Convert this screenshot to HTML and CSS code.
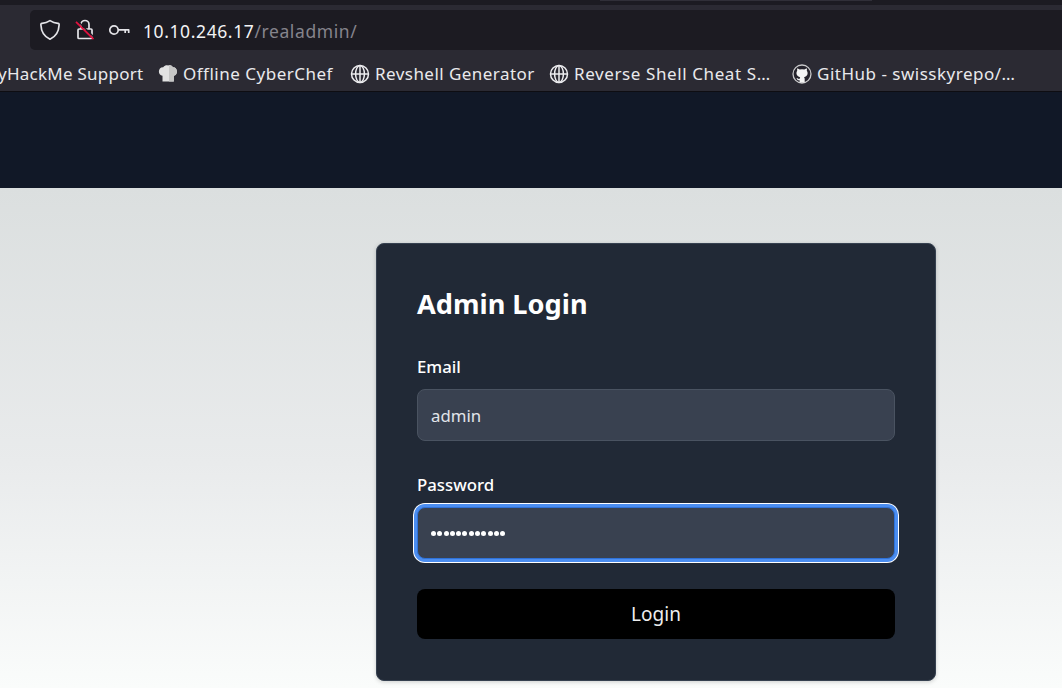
FILE: index.html
```html
<!DOCTYPE html>
<html lang="en">
<head>
<meta charset="utf-8">
<title>Admin Login</title>
<link rel="stylesheet" href="styles.css">
</head>
<body>
<div class="tabstrip"><span class="tab-edge"></span></div>
<div class="toolbar">
  <div class="urlbar">
    <svg class="ico" width="22" height="22" viewBox="0 0 22 22"><path d="M11 1.6C8.8 3 6 4 3 4.3C1.9 4.4 1.8 5 1.9 6C2.2 12.6 5.6 17.8 11 20.2C16.4 17.8 19.8 12.6 20.1 6C20.2 5 20.1 4.4 19 4.3C16 4 13.2 3 11 1.6Z"/></svg>
    <svg class="ico lock" width="22" height="22" viewBox="0 0 22 22"><path d="M7 10V5.5A4 4 0 0 1 15 5.5V10M5 10H17Q18 10 18 11V18.5Q18 19.5 17 19.5H5Q4 19.5 4 18.5V11Q4 10 5 10Z"/><path class="shade" d="M3.5 1.8L20.5 18.8"/><path class="slash" d="M2 2.8L19.5 20.2"/></svg>
    <svg class="ico key" width="22" height="22" viewBox="0 0 22 22"><circle cx="6" cy="11" r="4.2"/><path d="M10.2 10.8H20.7V14M17.2 10.8V14"/></svg>
    <span class="url"><b>10.10.246.17</b>/realadmin/</span>
  </div>
</div>
<nav class="bookmarks">
  <a class="bm first"><span>yHackMe Support</span></a>
  <a class="bm chef"><svg width="20" height="20" viewBox="0 0 20 20"><path fill="#e2e2e2" d="M4.5 11.7C-.8 10.8 0 3 5.2 3.2C7 .9 9 1 10 1.5C12 .7 14 1.5 15 3.2C20 3.2 20.2 10.7 15.8 11.7V17.5H4.5Z"/><path fill="#c6c6c6" d="M11 1.3C12.5 .9 14 1.5 15 3.2C20 3.2 20.2 10.7 15.8 11.7V17.5H11Z"/></svg><span>Offline CyberChef</span></a>
  <a class="bm rev"><svg class="globe" width="20" height="20" viewBox="0 0 20 20"><circle cx="10" cy="10" r="8.5"/><ellipse cx="10" cy="10" rx="4.4" ry="8.5"/><path d="M1.5 10H18.5M10 1.5V18.5"/></svg><span>Revshell Generator</span></a>
  <a class="bm cheat"><svg class="globe" width="20" height="20" viewBox="0 0 20 20"><circle cx="10" cy="10" r="8.5"/><ellipse cx="10" cy="10" rx="4.4" ry="8.5"/><path d="M1.5 10H18.5M10 1.5V18.5"/></svg><span>Reverse Shell Cheat S…</span></a>
  <a class="bm git"><svg width="20" height="20" viewBox="0 0 20 20"><circle cx="10" cy="10" r="9" fill="#25232c" stroke="#c9c9cb" stroke-width="1.3"/><path fill="#f4f4f4" d="M5.3 4.3L7.7 5.4Q10 4.9 12.3 5.4L14.7 4.3Q15.2 5.7 14.8 6.8C16.6 9.5 15.3 12.7 12 13.2Q12.7 14 12.7 15V18.5H7.6V16.3C5.5 16.7 5.3 15.2 4.4 14.4C6 14 6.3 15.4 7.6 15Q7.6 13.8 8.2 13.2C4.8 12.7 3.5 9.5 5.2 6.8Q4.9 5.5 5.3 4.3Z"/></svg><span>GitHub - swisskyrepo/…</span></a>
</nav>
<header class="site-header"></header>
<main class="page">
  <form class="card">
    <h1><span>Admin Login</span></h1>
    <label class="l-email"><span>Email</span></label>
    <div class="field"><span>admin</span></div>
    <label class="l-pass"><span>Password</span></label>
    <div class="field focused"><i></i><i></i><i></i><i></i><i></i><i></i><i></i><i></i><i></i><i></i><i></i><i></i></div>
    <button type="button"><span>Login</span></button>
  </form>
</main>
</body>
</html>
```
FILE: styles.css
```css
* { box-sizing: border-box; }
body { margin: 0; width: 1062px; height: 688px; overflow: hidden; display: flex; flex-direction: column; font-family: "Noto Sans", "Open Sans", sans-serif; background: #2b2a33; }
.tabstrip { height: 5px; flex: none; background: #1c1b22; }
.tab-edge { display: block; width: 272px; height: 1px; margin-left: 600px; background: #302f38; }
.toolbar { height: 53px; flex: none; padding: 5px 0 0 30px; }
.urlbar { height: 40px; border-radius: 5px 0 0 5px; background: #1c1b22; display: flex; align-items: center; padding-left: 9px; }
.ico { flex: none; fill: none; stroke: #e4e4e8; stroke-width: 1.7; stroke-linejoin: round; }
.lock { margin-left: 13px; }
.key { margin-left: 12px; }
.slash { stroke: #e2123f; stroke-width: 1.8; }
.shade { stroke: #1c1b22; stroke-width: 1.5; }
.url { margin: 2px 0 0 13px; font-size: 17.5px; letter-spacing: .6px; color: #85848c; white-space: nowrap; }
.url b { font-weight: 400; color: #f3f3f5; }
.bookmarks { height: 34px; flex: none; display: flex; align-items: center; padding-bottom: 2px; border-bottom: 1px solid #0e0d12; color: #e9e9ec; font-size: 17px; letter-spacing: .5px; white-space: nowrap; }
.bm { display: flex; align-items: center; gap: 5px; flex: none; }
.bm svg { flex: none; }
.first { width: 160px; margin-left: -2px; letter-spacing: .25px; }
.chef { width: 192px; }
.rev { width: 199px; letter-spacing: .45px; }
.cheat { width: 243px; letter-spacing: .6px; }
.globe { fill: none; stroke: #ededf0; stroke-width: 1.5; }
.site-header { height: 96px; flex: none; background: #111827; }
.page { flex: 1; padding: 55px 0 0 376px; background: linear-gradient(#dbdfdf, #e9ebec 55%, #fafcfb); }
.card { width: 560px; height: 438px; padding: 41px 40px 0; border: 1px solid #364150; border-radius: 8px; background: #212936; box-shadow: 0 1px 4px rgba(0,0,0,.18); display: flex; flex-direction: column; }
h1 { margin: 0; height: 40px; line-height: 38px; font-size: 27.2px; font-weight: 700; color: #fff; }
label { height: 24px; line-height: 24px; font-size: 16.8px; font-weight: 500; color: #fff; }
.l-email { margin-top: 30px; }
.l-pass { margin-top: 32px; }
.field { height: 52px; margin-top: 10px; flex: none; border: 1px solid #4a5361; border-radius: 8px; background: #394150; padding-left: 13px; display: flex; align-items: center; font-size: 16.8px; color: #e2e4e9; }
.l-email, .l-pass, h1 { flex: none; }
.focused { border-color: #2f72d8; box-shadow: 0 0 0 3px #4b8df0, 0 0 0 4px #fff; gap: 1.3px; }
.focused i { width: 5px; height: 5px; border-radius: 50%; background: #fff; flex: none; }
button { height: 50px; flex: none; margin-top: 30px; border: 0; border-radius: 8px; background: #000; color: #eee; font: 400 19px "Noto Sans", sans-serif; }
```
